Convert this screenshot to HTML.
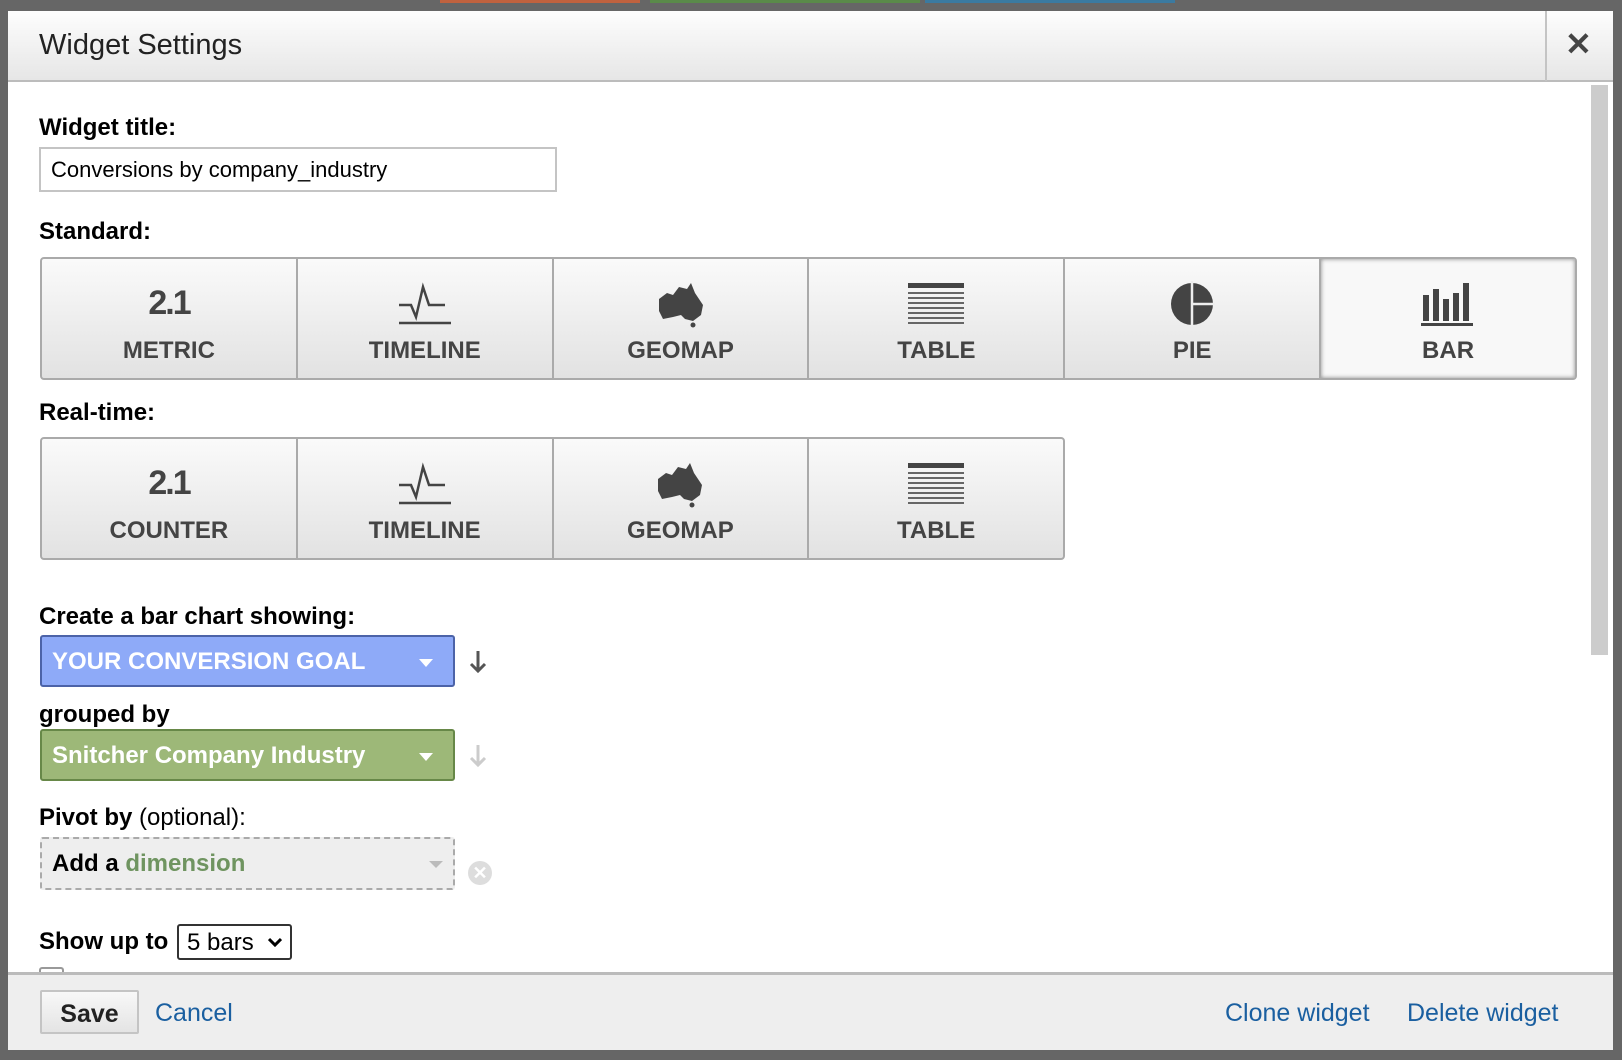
<!DOCTYPE html>
<html><head><meta charset="utf-8"><style>
*{box-sizing:border-box;margin:0;padding:0}
body{width:1622px;height:1060px;background:#666;font-family:"Liberation Sans",Arial,sans-serif;position:relative;overflow:hidden;color:#000}
.a{position:absolute}
#dlg{left:8px;top:11px;width:1605px;height:1039px;background:#fff}
#hdr{left:0;top:0;width:1605px;height:71px;background:linear-gradient(#fdfdfd,#e6e6e6);border-bottom:2px solid #bcbcbc}
.lbl{font-weight:bold;font-size:24px;left:31px}
.grp{display:flex;border:2px solid #aaa;border-radius:4px;overflow:hidden;background:linear-gradient(#fafafa,#e2e2e2)}
.grp div{flex:1;border-right:2px solid #aaa;position:relative;text-align:center}
.grp div:last-child{border-right:none}
.grp span{position:absolute;left:0;right:0;top:78px;font-weight:bold;font-size:24px;color:#444}
.grp svg{position:absolute;left:50%;top:22px;transform:translateX(-50%)}
.grp .sel{background:#f8f8f8;box-shadow:inset 0 0 4px #888}
.dd{left:32px;width:415px;height:52px;border-radius:3px;color:#fff;font-weight:bold;font-size:24px;padding:11px 0 0 10px}
.dd:after{content:"";position:absolute;right:20px;top:22px;border:7px solid transparent;border-top:8px solid #fff;border-bottom:none}
.lnk{color:#1a5fa0;font-size:25px;top:988px}
</style></head><body>
<div class="a" style="left:440px;top:0;width:200px;height:3px;background:#c0623f"></div>
<div class="a" style="left:650px;top:0;width:270px;height:3px;background:#5a8a4a"></div>
<div class="a" style="left:925px;top:0;width:250px;height:3px;background:#3b7aa0"></div>
<div id="dlg" class="a">
 <div id="hdr" class="a">
  <div class="a" style="left:31px;top:18px;font-size:29px;color:#222">Widget Settings</div>
  <div class="a" style="left:1537px;top:0;width:2px;height:70px;background:#c4c4c4"></div>
  <div class="a" style="left:1557px;top:14px;font-size:32px;font-weight:bold;color:#444">✕</div>
 </div>
 <div class="a" style="left:1583px;top:74px;width:17px;height:570px;background:#ccc"></div>
 <div class="a lbl" style="top:103px">Widget title:</div>
 <div class="a" style="left:31px;top:136px;width:518px;height:45px;border:2px solid #c4c4c4;font-size:22px;padding:8px 0 0 10px">Conversions by company_industry</div>
 <div class="a lbl" style="top:207px">Standard:</div>
 <div class="a grp" style="left:32px;top:246px;width:1537px;height:123px">
  <div><svg width="44" height="40" viewBox="0 0 44 40"><text x="22" y="33" text-anchor="middle" font-family="Liberation Sans" font-weight="bold" font-size="34" fill="#444" letter-spacing="-2">2.1</text></svg><span>METRIC</span></div>
  <div><svg width="56" height="44" viewBox="0 0 56 44"><path d="M2 24h12l5 12 7-30 6 18h16" stroke="#444" stroke-width="2.5" fill="none"/><path d="M2 42h52" stroke="#444" stroke-width="2.5"/></svg><span>TIMELINE</span></div>
  <div><svg width="56" height="48" viewBox="0 0 56 48"><path d="M6 18l8-6 6 2 6-8 8 2 4-6 4 10 8 12-2 10-8 6-8-2-4-4-8 2-10 2-4-8z" fill="#444"/><circle cx="40" cy="44" r="2.5" fill="#444"/></svg><span>GEOMAP</span></div>
  <div><svg width="56" height="44" viewBox="0 0 56 44"><rect x="0" y="2" width="56" height="5" fill="#444"/><g stroke="#666" stroke-width="2"><path d="M0 12h56M0 17h56M0 22h56M0 27h56M0 32h56M0 37h56M0 42h56"/></g></svg><span>TABLE</span></div>
  <div><svg width="46" height="46" viewBox="0 0 46 46"><circle cx="23" cy="23" r="21" fill="#444"/><path d="M23 0v46M23 23h23" stroke="#eee" stroke-width="2.5"/></svg><span>PIE</span></div>
  <div class="sel"><svg width="54" height="46" viewBox="0 0 54 46"><g fill="#444"><rect x="2" y="14" width="6" height="26"/><rect x="12" y="8" width="6" height="32"/><rect x="22" y="18" width="6" height="22"/><rect x="32" y="12" width="6" height="28"/><rect x="42" y="2" width="6" height="38"/><rect x="0" y="42" width="52" height="3"/></g></svg><span>BAR</span></div>
 </div>
 <div class="a lbl" style="top:388px">Real-time:</div>
 <div class="a grp" style="left:32px;top:426px;width:1025px;height:123px">
  <div><svg width="44" height="40" viewBox="0 0 44 40"><text x="22" y="33" text-anchor="middle" font-family="Liberation Sans" font-weight="bold" font-size="34" fill="#444" letter-spacing="-2">2.1</text></svg><span>COUNTER</span></div>
  <div><svg width="56" height="44" viewBox="0 0 56 44"><path d="M2 24h12l5 12 7-30 6 18h16" stroke="#444" stroke-width="2.5" fill="none"/><path d="M2 42h52" stroke="#444" stroke-width="2.5"/></svg><span>TIMELINE</span></div>
  <div><svg width="56" height="48" viewBox="0 0 56 48"><path d="M6 18l8-6 6 2 6-8 8 2 4-6 4 10 8 12-2 10-8 6-8-2-4-4-8 2-10 2-4-8z" fill="#444"/><circle cx="40" cy="44" r="2.5" fill="#444"/></svg><span>GEOMAP</span></div>
  <div><svg width="56" height="44" viewBox="0 0 56 44"><rect x="0" y="2" width="56" height="5" fill="#444"/><g stroke="#666" stroke-width="2"><path d="M0 12h56M0 17h56M0 22h56M0 27h56M0 32h56M0 37h56M0 42h56"/></g></svg><span>TABLE</span></div>
 </div>
 <div class="a lbl" style="top:592px">Create a bar chart showing:</div>
 <div class="a dd" style="top:624px;background:#8eaaf8;border:2px solid #4c63a8">YOUR CONVERSION GOAL</div>
 <svg class="a" style="left:460px;top:639px" width="20" height="24" viewBox="0 0 20 24"><path d="M10 1v20M3 14l7 7 7-7" stroke="#555" stroke-width="3" fill="none"/></svg>
 <div class="a lbl" style="top:690px">grouped by</div>
 <div class="a dd" style="top:718px;background:#9db878;border:2px solid #678848">Snitcher Company Industry</div>
 <svg class="a" style="left:460px;top:733px" width="20" height="24" viewBox="0 0 20 24"><path d="M10 1v20M3 14l7 7 7-7" stroke="#ccc" stroke-width="3" fill="none"/></svg>
 <div class="a lbl" style="top:793px">Pivot by <span style="font-weight:normal">(optional):</span></div>
 <div class="a" style="left:32px;top:826px;width:415px;height:53px;background:#eee;border:2px dashed #aaa;border-radius:3px;font-size:24px;font-weight:bold;padding:11px 0 0 10px">Add a <span style="color:#6f9460">dimension</span><div class="a" style="right:10px;top:22px;border:7px solid transparent;border-top:7px solid #bbb;border-bottom:none"></div></div>
 <div class="a" style="left:460px;top:850px;width:24px;height:24px;border-radius:50%;background:#ddd;color:#fff;font-size:18px;font-weight:bold;text-align:center;line-height:24px">✕</div>
 <div class="a lbl" style="top:917px">Show up to</div>
 <div class="a" style="left:169px;top:913px;width:115px;height:36px;border:2px solid #333;border-radius:3px;font-size:24px;padding:3px 0 0 8px">5 bars<svg style="position:absolute;right:8px;top:11px" width="14" height="10" viewBox="0 0 14 10"><path d="M1 2l6 6 6-6" stroke="#000" stroke-width="3" fill="none"/></svg></div>
 <div class="a" style="left:31px;top:956px;width:25px;height:6px;border:2px solid #999;border-bottom:none;border-radius:3px 3px 0 0"></div>
 <div class="a" style="left:0;top:961px;width:1605px;height:78px;background:#eee;border-top:3px solid #bbb"></div>
 <div class="a" style="left:32px;top:979px;width:99px;height:44px;border:2px solid #c4c4c4;border-radius:2px;background:linear-gradient(#f8f8f8,#e4e4e4);font-weight:bold;font-size:25px;text-align:center;padding-top:8px;color:#222">Save</div>
 <div class="a lnk" style="left:147px">Cancel</div>
 <div class="a lnk" style="left:1217px">Clone widget</div>
 <div class="a lnk" style="left:1399px">Delete widget</div>
</div>
</body></html>
